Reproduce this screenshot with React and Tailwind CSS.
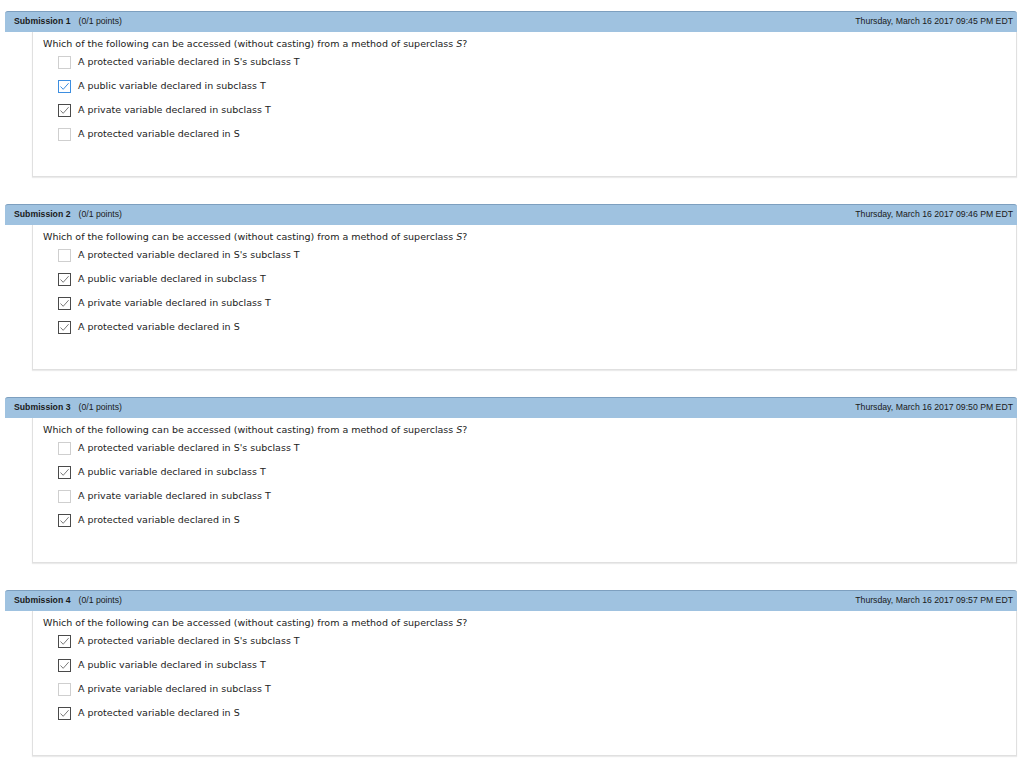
import React from 'react';

const options = [
  "A protected variable declared in S's subclass T",
  'A public variable declared in subclass T',
  'A private variable declared in subclass T',
  'A protected variable declared in S',
];

// per option: 0 = empty, 1 = checked, 2 = checked + focused (blue)
const submissions = [
  { n: 1, date: 'Thursday, March 16 2017 09:45 PM EDT', state: [0, 2, 1, 0] },
  { n: 2, date: 'Thursday, March 16 2017 09:46 PM EDT', state: [0, 1, 1, 1] },
  { n: 3, date: 'Thursday, March 16 2017 09:50 PM EDT', state: [0, 1, 0, 1] },
  { n: 4, date: 'Thursday, March 16 2017 09:57 PM EDT', state: [1, 1, 0, 1] },
];

const Box = ({ state }) => {
  if (state === 0) {
    return <span className="block w-[13px] h-[13px] border border-[#cfcfcf] bg-white" />;
  }
  const blue = state === 2;
  return (
    <span
      className={
        blue
          ? 'block w-[13px] h-[13px] border border-[#3d8ee0] bg-white'
          : 'block w-[13px] h-[13px] border border-[#4a4a4a] bg-white'
      }
    >
      <svg viewBox="0 0 11 11" className="w-[11px] h-[11px]">
        <polyline
          points="1.5,5.5 4.2,8.3 9.6,2.2"
          fill="none"
          stroke={blue ? '#3d8ee0' : '#7a7a7a'}
          strokeWidth="1"
        />
      </svg>
    </span>
  );
};

const Submission = ({ n, date, state }) => (
  <div className="w-[1012px] ml-[5px]">
    <div className="h-[21px] bg-[#9fc2e0] border-t border-[#7d9fbf] rounded-t-[3px] flex items-center justify-between pl-[9px] pr-[4px] font-['Liberation_Sans',Arial,sans-serif] text-[8.7px] text-[#1a1a1a]">
      <div>
        <span className="font-bold">Submission {n}</span>
        <span className="ml-[8px]">(0/1 points)</span>
      </div>
      <span>{date}</span>
    </div>
    <div className="ml-[27px] h-[145px] bg-white border-l border-r border-b border-[#e0e0e0] shadow-[0_1px_1px_rgba(0,0,0,0.08)] pl-[10px] pt-[6px] font-['DejaVu_Sans',Verdana,sans-serif] text-[9.5px] text-[#222]">
      <p className="leading-[12px]">
        Which of the following can be accessed (without casting) from a method of superclass <i>S</i>?
      </p>
      <ul className="ml-[15px]">
        {options.map((o, i) => (
          <li key={i} className="h-[24px] flex items-center gap-[7px]">
            <Box state={state[i]} />
            <span>{o}</span>
          </li>
        ))}
      </ul>
    </div>
  </div>
);

export default function App() {
  return (
    <div className="w-[1024px] h-[770px] bg-white pt-[11px] flex flex-col gap-[27px] overflow-hidden">
      {submissions.map((s) => (
        <Submission key={s.n} {...s} />
      ))}
    </div>
  );
}
